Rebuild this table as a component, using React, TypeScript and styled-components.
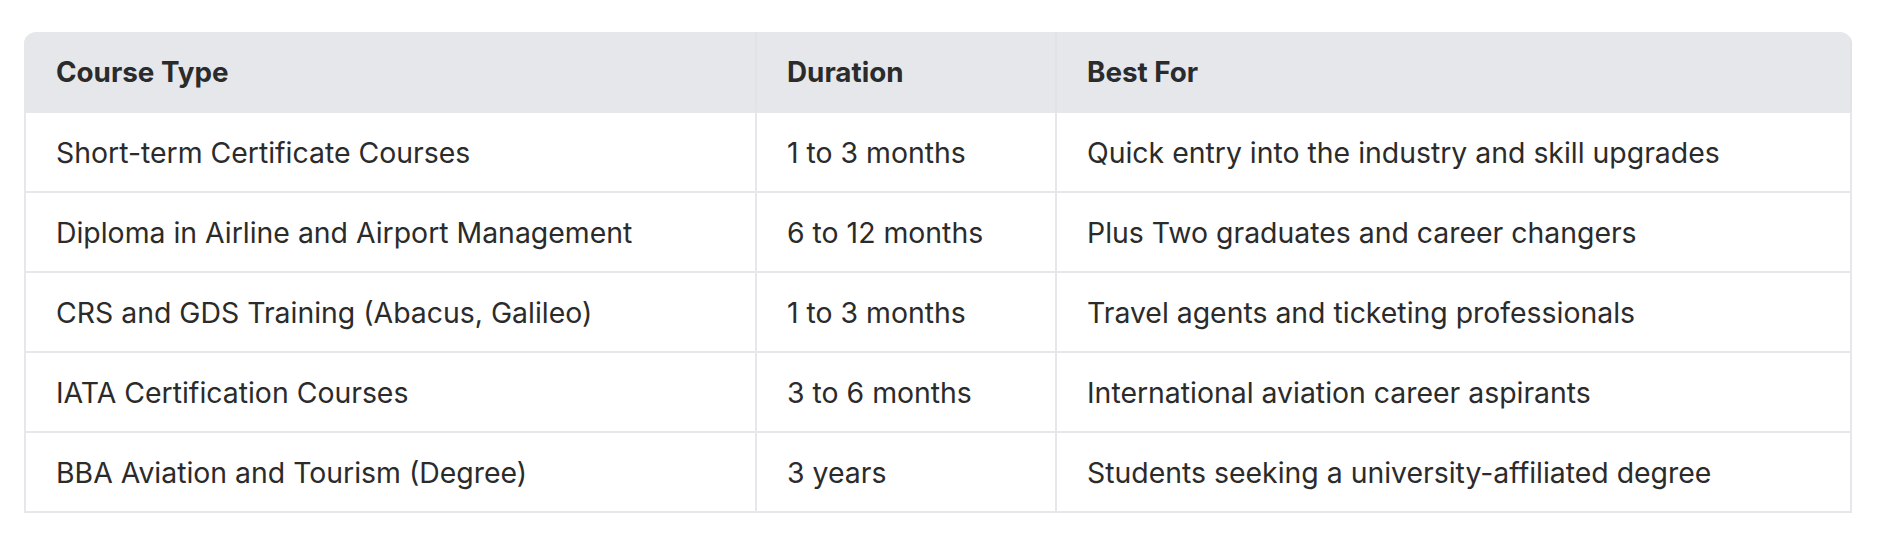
import styled, { createGlobalStyle } from "styled-components";

interface CourseRow {
  readonly type: string;
  readonly duration: string;
  readonly bestFor: string;
}

const columns = [
  { key: "type", title: "Course Type", width: 733 },
  { key: "duration", title: "Duration", width: 300 },
  { key: "bestFor", title: "Best For", width: 795 },
];

const rows: Array<CourseRow> = [
  {
    type: "Short-term Certificate Courses",
    duration: "1 to 3 months",
    bestFor: "Quick entry into the industry and skill upgrades",
  },
  {
    type: "Diploma in Airline and Airport Management",
    duration: "6 to 12 months",
    bestFor: "Plus Two graduates and career changers",
  },
  {
    type: "CRS and GDS Training (Abacus, Galileo)",
    duration: "1 to 3 months",
    bestFor: "Travel agents and ticketing professionals",
  },
  {
    type: "IATA Certification Courses",
    duration: "3 to 6 months",
    bestFor: "International aviation career aspirants",
  },
  {
    type: "BBA Aviation and Tourism (Degree)",
    duration: "3 years",
    bestFor: "Students seeking a university-affiliated degree",
  },
];

const GlobalStyle = createGlobalStyle`
  body {
    margin: 0;
    background: #ffffff;
    font-family: Inter, "Liberation Sans", sans-serif;
    color: #2b2b2b;
  }
`;

export default function App() {
  return (
    <>
      <GlobalStyle />
      <Page>
        <TableWrapper>
          <StyledTable>
            <colgroup>
              {columns.map(({ key, width }) => (
                <col key={key} style={{ width }} />
              ))}
            </colgroup>
            <thead>
              <tr>
                {columns.map(({ key, title }) => (
                  <HeaderCell key={`thead-${key}`}>{title}</HeaderCell>
                ))}
              </tr>
            </thead>
            <tbody>
              {rows.map((row, index) => (
                <tr key={index}>
                  <BodyCell>{row.type}</BodyCell>
                  <BodyCell>{row.duration}</BodyCell>
                  <BodyCell>{row.bestFor}</BodyCell>
                </tr>
              ))}
            </tbody>
          </StyledTable>
        </TableWrapper>
      </Page>
    </>
  );
}

const Page = styled.div`
  padding: 32px 44px 0 24px;
`;

const TableWrapper = styled.div`
  width: 1828px;
  border-radius: 12px 12px 0 0;
  overflow: hidden;
`;

const StyledTable = styled.table`
  width: 100%;
  table-layout: fixed;
  border-collapse: separate;
  border-spacing: 0;
  font-size: 28.4px;
`;

const cellBase = `
  text-align: left;
  padding: 21px 30px 19px;
  border-right: 2px solid #e5e7eb;
  border-bottom: 2px solid #e5e7eb;
  white-space: nowrap;

  &:first-child {
    border-left: 2px solid #e5e7eb;
  }
`;

const HeaderCell = styled.th`
  ${cellBase}
  line-height: 39px;
  font-size: 27.8px;
  font-weight: 700;
  background: #e5e7eb;
  border-right-color: #e1e3e7;
`;

const BodyCell = styled.td`
  ${cellBase}
  line-height: 38px;
  font-weight: 400;
`;
